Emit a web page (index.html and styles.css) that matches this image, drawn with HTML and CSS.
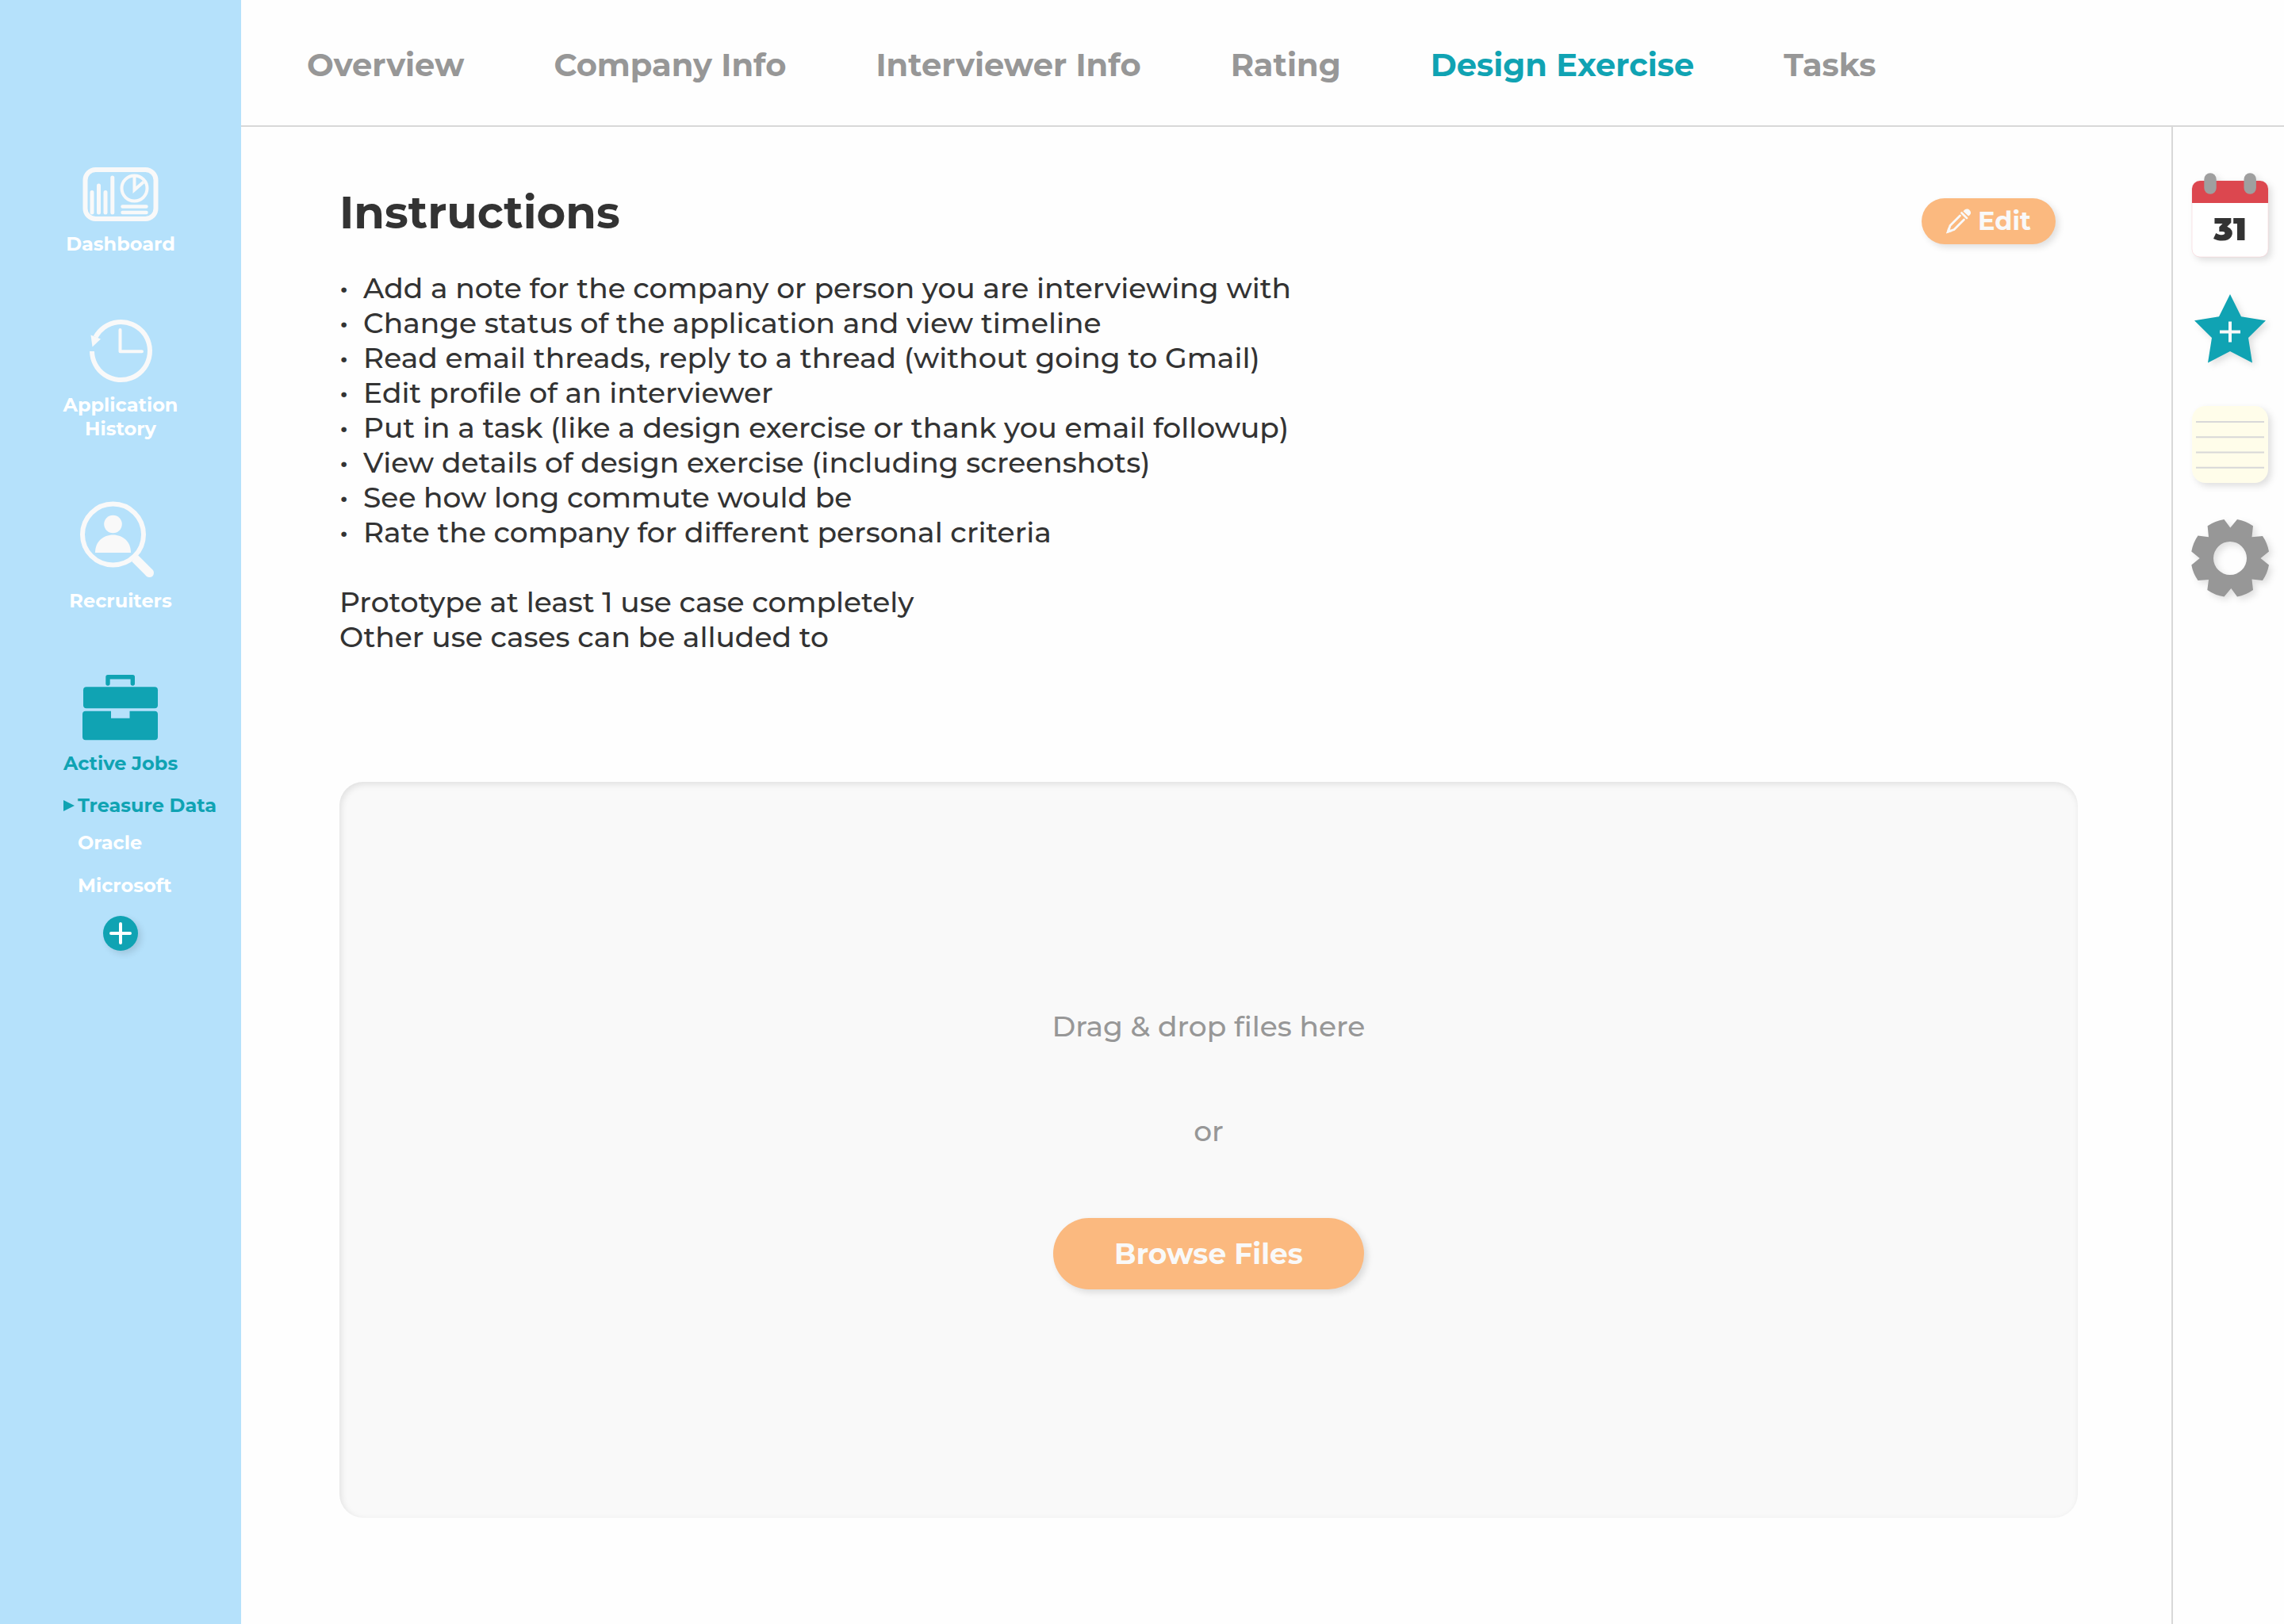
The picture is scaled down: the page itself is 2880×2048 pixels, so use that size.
FILE: index.html
```html
<!DOCTYPE html>
<html lang="en">
<head>
  <meta charset="utf-8">
  <meta name="viewport" content="width=device-width, initial-scale=1">
  <title>Design Exercise – Treasure Data</title>
  <link rel="stylesheet" href="styles.css">
</head>
<body>
  <div class="app">
    <nav class="sidebar" aria-label="Main">
      <a class="nav-item" href="#dashboard">
        <svg class="nav-icon" width="96" height="68" viewBox="0 0 96 68" fill="none" stroke="currentColor" aria-hidden="true">
          <rect x="3.5" y="3" width="89" height="62" rx="13" stroke-width="6"/>
          <path d="M12 31.5V57M20.500 23V57M29 31.500V57M37.800 13V57" stroke-width="5" stroke-linecap="round"/>
          <circle cx="65.500" cy="26.500" r="16" stroke-width="4"/>
          <path d="M65.500 10V28.500L77 18.500" stroke-width="4"/>
          <path d="M50.500 49.500H80.500M50.500 57H80.500" stroke-width="4.500" stroke-linecap="round"/>
        </svg>
        <span>Dashboard</span>
      </a>
      <a class="nav-item" href="#history">
        <svg class="nav-icon" width="80" height="82" viewBox="0 0 80 82" fill="none" stroke="currentColor" aria-hidden="true">
          <path d="M4 43A36.500 36.500 0 1 0 8.500 25" stroke-width="6"/>
          <path d="M2.500 22.500L15 27.500L4.500 37.500Z" fill="currentColor" stroke="none"/>
          <path d="M39.500 16V43.300H67" stroke-width="4" stroke-linecap="round" stroke-linejoin="round"/>
        </svg>
        <span>Application<br>History</span>
      </a>
      <a class="nav-item" href="#recruiters">
        <svg class="nav-icon" width="102" height="96" viewBox="0 0 102 96" fill="currentColor" aria-hidden="true">
          <circle cx="41.500" cy="41" r="38.500" fill="none" stroke="currentColor" stroke-width="6"/>
          <circle cx="41.500" cy="28" r="11.300"/>
          <path d="M19 64C19 50 29 41.500 41.500 41.500S64 50 64 64Z"/>
          <path d="M69 71L87.500 89.500" fill="none" stroke="currentColor" stroke-width="11"/>
          <circle cx="87.500" cy="89.500" r="5.500"/>
        </svg>
        <span>Recruiters</span>
      </a>
      <div class="nav-group">
        <a class="nav-item nav-item-active" href="#jobs">
          <svg class="nav-icon" width="96" height="84" viewBox="0 0 96 84" fill="currentColor" aria-hidden="true">
            <path d="M32 12V3.700H63.300V12" fill="none" stroke="currentColor" stroke-width="5.400" stroke-linecap="round" stroke-linejoin="round"/>
            <rect x="1" y="16.300" width="94" height="27" rx="4"/>
            <path d="M4 46.700H36V55.700H59.500V46.700H91A4 4 0 0 1 95 50.700V79.300A4 4 0 0 1 91 83.300H4A4 4 0 0 1 0 79.300V50.700A4 4 0 0 1 4 46.700Z"/>
          </svg>
          <span>Active Jobs</span>
        </a>
        <ul class="jobs">
          <li class="job job-active"><svg width="14" height="14" viewBox="0 0 14 14" aria-hidden="true"><path d="M0 0L14 7L0 14Z" fill="currentColor"/></svg><a href="#treasure-data">Treasure Data</a></li>
          <li class="job"><a href="#oracle">Oracle</a></li>
          <li class="job"><a href="#microsoft">Microsoft</a></li>
        </ul>
        <button class="add-job" type="button" aria-label="Add job">
          <svg width="28" height="28" viewBox="0 0 28 28" aria-hidden="true"><path d="M14 2V26M2 14H26" stroke="currentColor" stroke-width="4" stroke-linecap="round"/></svg>
        </button>
      </div>
    </nav>

    <div class="workspace">
      <nav class="tabs" aria-label="Application sections">
        <a href="#overview">Overview</a>
        <a href="#company">Company Info</a>
        <a href="#interviewer">Interviewer Info</a>
        <a href="#rating">Rating</a>
        <a class="tab-active" href="#exercise" aria-current="page">Design Exercise</a>
        <a href="#tasks">Tasks</a>
      </nav>

      <div class="body">
        <main class="content">
          <header class="content-head">
            <h1>Instructions</h1>
            <button class="pill edit" type="button">
              <svg width="32" height="32" viewBox="0 0 32 32" fill="none" stroke="currentColor" aria-hidden="true">
                <path d="M21.500 3.500C23.500 .5 27 -.5 29.500 2S31.500 7.500 28 9.500Z" fill="currentColor" stroke="none"/>
                <path d="M19.500 5.500L26 12" stroke-width="2.800" stroke-linecap="round"/>
                <path d="M17.500 9L5 21.500L2.500 29L10 26.500L22.500 14" stroke-width="2.800" stroke-linecap="round"/>
                <path d="M0 31.500L2.500 24L7.500 29Z" fill="currentColor" stroke="none"/>
              </svg>
              Edit
            </button>
          </header>

          <ul class="instructions">
            <li>Add a note for the company or person you are interviewing with</li>
            <li>Change status of the application and view timeline</li>
            <li>Read email threads, reply to a thread (without going to Gmail)</li>
            <li>Edit profile of an interviewer</li>
            <li>Put in a task (like a design exercise or thank you email followup)</li>
            <li>View details of design exercise (including screenshots)</li>
            <li>See how long commute would be</li>
            <li>Rate the company for different personal criteria</li>
          </ul>
          <p class="note">Prototype at least 1 use case completely<br>Other use cases can be alluded to</p>

          <section class="dropzone" aria-label="File upload">
            <p>Drag &amp; drop files here</p>
            <p>or</p>
            <button class="pill browse" type="button">Browse Files</button>
          </section>
        </main>

        <aside class="rail" aria-label="Tools">
          <button type="button" aria-label="Calendar">
            <svg width="98" height="108" viewBox="0 0 98 108" aria-hidden="true">
              <rect x="2" y="11" width="96" height="96" rx="10" fill="#fff" stroke="#f6c9cc" stroke-width=".5"/>
              <path d="M2 39V21A10 10 0 0 1 12 11H88A10 10 0 0 1 98 21V39Z" fill="#dc474f"/>
              <rect x="17.300" y="1.300" width="15.400" height="26.400" rx="7.700" fill="#9f9f9f"/>
              <rect x="67.500" y="1.300" width="15.400" height="26.400" rx="7.700" fill="#9f9f9f"/>
              <text class="calendar-day" x="50" y="86" text-anchor="middle">31</text>
            </svg>
          </button>
          <button type="button" aria-label="Add to favourites">
            <svg width="98" height="95" viewBox="0 0 98 95" aria-hidden="true">
              <path d="M50 0L64 28.300L95 33.200L73 55L78 86.500L50 72L22 86.500L27 55L5 33.200L36 28.300Z" fill="#10a3b3"/>
              <path d="M50 34.500V60.500M37 47.500H63" stroke="#f9f9f9" stroke-width="4"/>
            </svg>
          </button>
          <button type="button" aria-label="Notes">
            <svg width="98" height="97" viewBox="0 0 98 97" aria-hidden="true">
              <rect x="2" y="0" width="96" height="97" rx="17" fill="#fffdea"/>
              <path d="M7 20H93M7 39.300H93M7 58.500H93M7 77.800H93" stroke="#d8d8d8" stroke-width="2"/>
            </svg>
          </button>
          <button type="button" aria-label="Settings">
            <svg width="98" height="98" viewBox="0 0 98 98" aria-hidden="true">
              <path fill="#979797" fill-rule="evenodd" d="M59 0A49.700 49.700 0 0 1 79 8.300L77.500 22.200L91 21A49.700 49.700 0 0 1 99 40.500L88.500 49L99 57.500A49.700 49.700 0 0 1 91 77L77.500 75.500L79 89A49.700 49.700 0 0 1 59 97.500L51.300 87L42.500 97.500A49.700 49.700 0 0 1 21.300 89L23 76L9.500 77A49.700 49.700 0 0 1 1.300 57.500L11.700 49L1.300 40.500A49.700 49.700 0 0 1 9.500 20.500L23 22.200L21.600 8.300A49.700 49.700 0 0 1 42.500 0L50.300 10.500ZM50 28A21 21 0 0 0 50 70A21 21 0 0 0 50 28Z"/>
            </svg>
          </button>
        </aside>
      </div>
    </div>
  </div>
</body>
</html>
```
FILE: styles.css
```css
:root {
  --teal: #10a3b3;
  --sky: #b5e1fb;
  --orange: #fbb97f;
  --paper: #f9f9f9;
  --grey: #979797;
  --line: #d8d8d8;
  --ink: #333;
}

* {
  box-sizing: border-box;
}

body {
  margin: 0;
  background: #fefefe;
  color: var(--ink);
  font: 500 36px/44px Montserrat, Inter, sans-serif;
}

h1,
p,
ul {
  margin: 0;
  padding: 0;
}

ul {
  list-style: none;
}

a {
  color: inherit;
  text-decoration: none;
}

button {
  padding: 0;
  border: 0;
  background: none;
  color: inherit;
  font: inherit;
  cursor: pointer;
}

svg {
  display: block;
  flex: none;
  overflow: visible;
}

.app {
  display: flex;
  min-height: 100vh;
}

/* Sidebar */

.sidebar {
  display: flex;
  flex: none;
  flex-direction: column;
  gap: 77px;
  width: 304px;
  padding-top: 211px;
  background: var(--sky);
  color: #fff;
  font-size: 24px;
  font-weight: 700;
  line-height: 30px;
}

.nav-item {
  display: flex;
  flex-direction: column;
  align-items: center;
  gap: 14px;
  text-align: center;
}

.nav-icon {
  color: var(--paper);
}

.nav-item-active,
.nav-item-active .nav-icon,
.job-active {
  color: var(--teal);
}

.nav-group {
  display: flex;
  flex-direction: column;
  align-items: center;
  gap: 23px;
}

.jobs {
  display: flex;
  flex-direction: column;
  gap: 24px;
  align-self: stretch;
  padding-left: 98px;
}

.job {
  display: flex;
  align-items: center;
}

.job-active {
  gap: 4px;
  margin: 0 0 -7px -18px;
}

.add-job {
  display: grid;
  place-items: center;
  width: 44px;
  height: 44px;
  border-radius: 50%;
  background: var(--teal);
  box-shadow: 4px 4px 8px rgba(0, 0, 0, 0.12);
  color: #fff;
}

/* Top tabs */

.workspace {
  display: flex;
  flex: 1;
  flex-direction: column;
  min-width: 0;
}

.tabs {
  display: flex;
  align-items: center;
  gap: 113px;
  height: 160px;
  padding: 6px 0 0 83px;
  border-bottom: 2px solid var(--line);
  color: var(--grey);
  font-size: 40px;
  font-weight: 700;
  line-height: 48px;
}

.tab-active {
  color: var(--teal);
}

.body {
  display: flex;
  flex: 1;
}

/* Main column */

.content {
  display: flex;
  flex: 1;
  flex-direction: column;
  padding: 74px 118px 134px 124px;
}

.content-head {
  display: flex;
  align-items: flex-start;
  justify-content: space-between;
  padding-right: 28px;
}

h1 {
  font-size: 56px;
  font-weight: 700;
  line-height: 68px;
}

.pill {
  display: flex;
  align-items: center;
  justify-content: center;
  border-radius: 45px;
  background: var(--orange);
  box-shadow: 4px 4px 8px rgba(0, 0, 0, 0.12);
  color: var(--paper);
  font-weight: 700;
}

.edit {
  gap: 8px;
  width: 169px;
  height: 58px;
  margin-top: 16px;
  font-size: 32px;
}

.instructions {
  margin-top: 33px;
}

.instructions li {
  display: flex;
}

.instructions li::before {
  content: "•";
  flex: none;
  width: 30px;
}

.note {
  margin-top: 44px;
}

.dropzone {
  display: flex;
  flex: 1;
  flex-direction: column;
  align-items: center;
  justify-content: center;
  gap: 88px;
  margin-top: 161px;
  padding-bottom: 2px;
  border-radius: 30px;
  background: var(--paper);
  box-shadow: inset 2px 3px 8px rgba(0, 0, 0, 0.1);
  color: var(--grey);
  font-variant-ligatures: none;
}

.browse {
  width: 392px;
  height: 90px;
}

/* Tool rail */

.rail {
  display: flex;
  flex: none;
  flex-direction: column;
  align-items: center;
  gap: 46px;
  width: 142px;
  padding: 57px 0 0 2px;
  border-left: 2px solid var(--line);
}

.rail svg {
  filter: drop-shadow(4px 4px 4px rgba(0, 0, 0, 0.12));
}

.calendar-day {
  fill: var(--ink);
  font-size: 40px;
  font-weight: 900;
}
```
